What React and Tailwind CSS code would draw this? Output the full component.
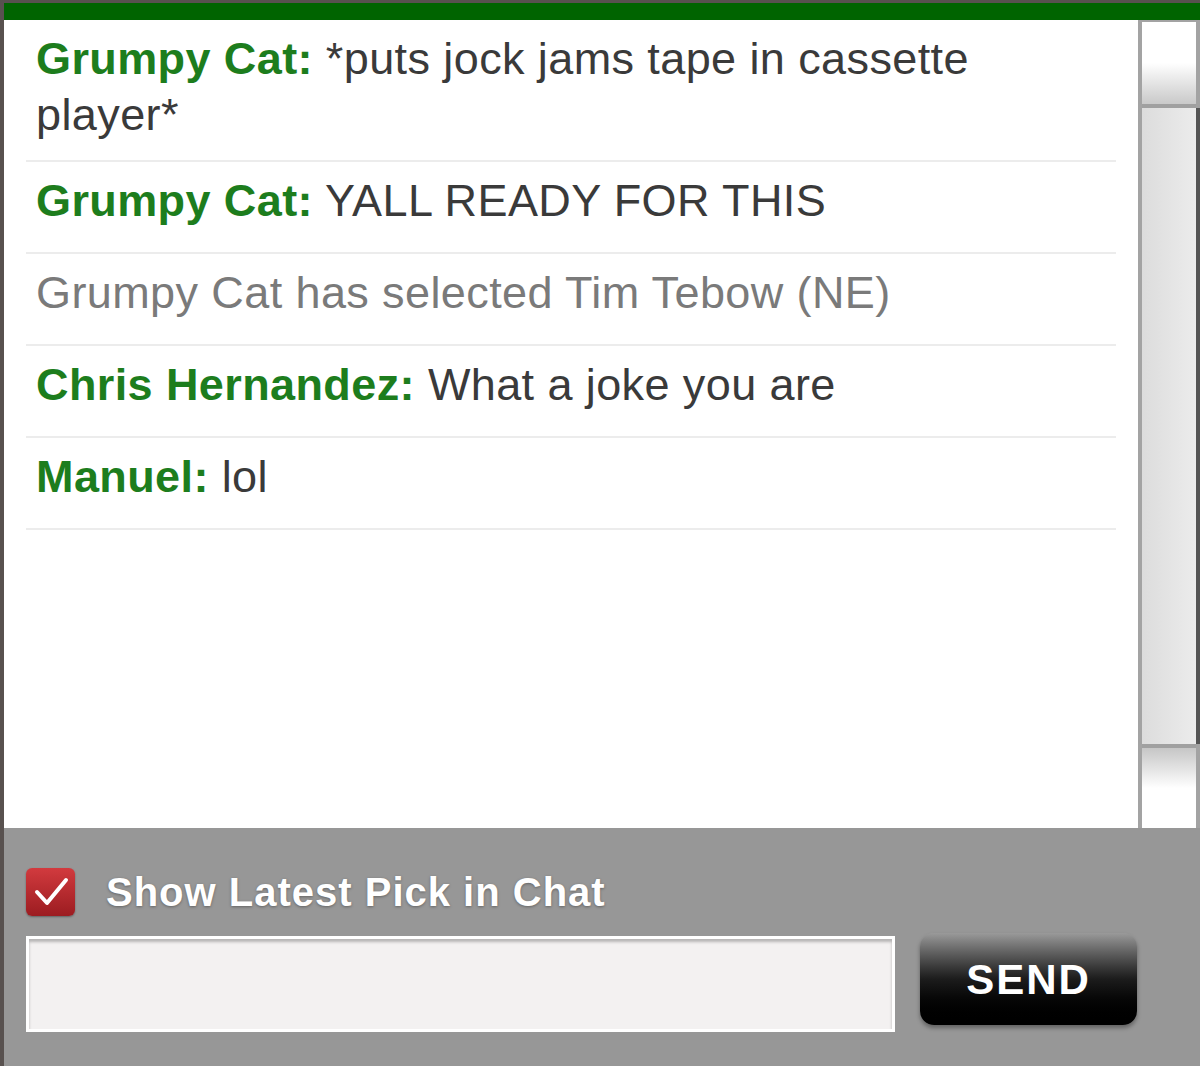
import React from 'react';

const messages = [
  { user: 'Grumpy Cat', text: '*puts jock jams tape in cassette player*' },
  { user: 'Grumpy Cat', text: 'YALL READY FOR THIS' },
  { system: 'Grumpy Cat has selected Tim Tebow (NE)' },
  { user: 'Chris Hernandez', text: 'What a joke you are' },
  { user: 'Manuel', text: 'lol' },
];

function ChatRow({ msg, first }) {
  return (
    <li
      className={`border-b-2 border-[#ececec] pl-[10px] pr-4 pt-[11px] ${first ? 'pb-[17px]' : 'pb-[23px]'}`}
    >
      {msg.system ? (
        <span className="text-[#7a7a7a]">{msg.system}</span>
      ) : (
        <>
          <span className="font-bold text-[#1d7d1d]">{msg.user}:</span>{' '}
          <span className="text-[#3a3a3a]">{msg.text}</span>
        </>
      )}
    </li>
  );
}

function Scrollbar() {
  return (
    <div className="w-[62px] flex flex-col bg-[#a3a3a3] pl-[4px] pt-[2px]">
      <div className="h-[86px] mr-[4px] bg-gradient-to-b from-white via-white to-[#c9c9c9] border-b-[4px] border-[#a0a0a0]" />
      <div className="flex-1 flex">
        <div className="flex-1 bg-gradient-to-r from-[#dcdcdc] to-[#ececec]" />
        <div className="w-[4px] bg-[#555]" />
      </div>
      <div className="h-[84px] mr-[4px] bg-gradient-to-b from-[#c6c6c6] via-white to-white border-t-[4px] border-[#a0a0a0]" />
    </div>
  );
}

export default function App() {
  return (
    <div
      className="w-[1200px] h-[1066px] bg-[#58514f] pl-[4px] pt-[3px] flex flex-col overflow-hidden"
      style={{ fontFamily: '"Liberation Sans", Arial, sans-serif' }}
    >
      <div className="h-[17px] bg-[#006400] shrink-0" />
      <div className="h-[808px] flex shrink-0">
        <div className="flex-1 bg-white pl-[22px] pr-[22px]">
          <ul className="text-[45px] leading-[56px] tracking-[0.4px]">
            {messages.map((m, i) => (
              <ChatRow key={i} msg={m} first={i === 0} />
            ))}
          </ul>
        </div>
        <Scrollbar />
      </div>
      <div className="flex-1 bg-[#979797] pl-[22px] pt-[40px]">
        <label className="flex items-center gap-[31px]">
          <span className="w-[49px] h-[48px] rounded-[6px] bg-gradient-to-b from-[#d23a3e] to-[#9c1c21] shadow-[0_1px_2px_rgba(0,0,0,0.35)] flex items-center justify-center">
            <svg width="38" height="34" viewBox="0 0 38 34" fill="none">
              <path d="M5 17 L15 28 L34 5" stroke="white" strokeWidth="4" strokeLinecap="round" strokeLinejoin="round" />
            </svg>
          </span>
          <span className="text-white font-bold text-[40px] tracking-[1px] leading-none [text-shadow:0_1px_3px_rgba(0,0,0,0.35)]">
            Show Latest Pick in Chat
          </span>
        </label>
        <div className="flex items-start gap-[25px] mt-[20px]">
          <input
            type="text"
            className="w-[869px] h-[96px] bg-[#f3f1f1] border-[3px] border-white shadow-[inset_0_3px_3px_rgba(0,0,0,0.25)] outline-none"
          />
          <button className="w-[217px] h-[92px] -mt-[3px] rounded-[14px] bg-gradient-to-b from-[#9a9a9a] via-[#1c1c1c] to-black text-white font-bold text-[42px] tracking-[2px] shadow-[0_3px_4px_rgba(0,0,0,0.35)]">
            SEND
          </button>
        </div>
      </div>
    </div>
  );
}
